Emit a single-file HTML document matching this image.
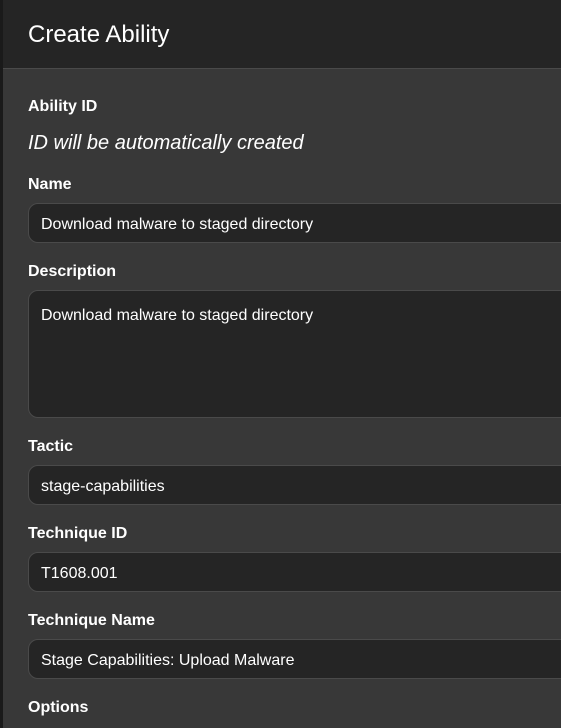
<!DOCTYPE html>
<html><head><meta charset="utf-8"><style>
html,body{margin:0;padding:0;width:561px;height:728px;overflow:hidden;background:#1a1a1a;font-family:"Liberation Sans",sans-serif;color:#fff}
.modal{position:absolute;left:3px;top:0;width:600px;height:728px;background:#383838}
.hdr{position:absolute;left:0;top:0;right:0;height:68px;background:#252525;border-bottom:1px solid #4a4a4a}
.hdr span{position:absolute;left:25px;top:21px;font-size:24px;color:#fff}
.lbl{position:absolute;left:25px;font-size:16px;font-weight:bold;color:#fff}
.inp{position:absolute;left:25px;width:600px;background:#252525;border:1px solid #4a4a4a;border-radius:10px;box-sizing:border-box;font-size:16px;color:#fff;padding-left:12px}
.it{position:absolute;left:25px;top:132px;font-size:20px;font-style:italic;color:#fff}
</style></head><body>
<div class="modal">
<div class="hdr"><span>Create Ability</span></div>
<div class="lbl" style="top:98px">Ability ID</div>
<div class="it">ID will be automatically created</div>
<div class="lbl" style="top:176px">Name</div>
<div class="inp" style="top:203px;height:40px;line-height:42px">Download malware to staged directory</div>
<div class="lbl" style="top:263px">Description</div>
<div class="inp" style="top:290px;height:128px;padding-top:16px">Download malware to staged directory</div>
<div class="lbl" style="top:438px">Tactic</div>
<div class="inp" style="top:465px;height:40px;line-height:42px">stage-capabilities</div>
<div class="lbl" style="top:525px">Technique ID</div>
<div class="inp" style="top:552px;height:40px;line-height:42px">T1608.001</div>
<div class="lbl" style="top:612px">Technique Name</div>
<div class="inp" style="top:639px;height:40px;line-height:42px">Stage Capabilities: Upload Malware</div>
<div class="lbl" style="top:699px">Options</div>
</div>
</body></html>
